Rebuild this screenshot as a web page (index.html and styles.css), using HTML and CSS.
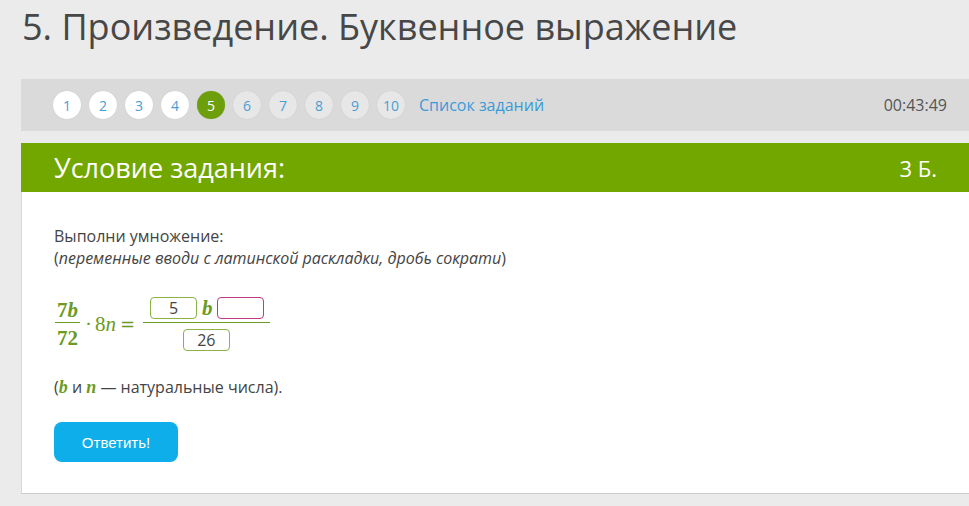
FILE: index.html
```html
<!DOCTYPE html>
<html lang="ru">
<head>
<meta charset="utf-8">
<link rel="stylesheet" href="styles.css">
</head>
<body>
<h1 class="title">5. Произведение. Буквенное выражение</h1>
<div class="main">
  <div class="nav">
    <div class="steps">
      <span class="step done">1</span>
      <span class="step done">2</span>
      <span class="step done">3</span>
      <span class="step done">4</span>
      <span class="step active">5</span>
      <span class="step">6</span>
      <span class="step">7</span>
      <span class="step">8</span>
      <span class="step">9</span>
      <span class="step">10</span>
      <a class="list-link">Список заданий</a>
    </div>
    <div class="timer">00:43:49</div>
  </div>
  <div class="head">
    <div class="head-title">Условие задания:</div>
    <div class="head-points">3 Б.</div>
  </div>
  <div class="card">
    <p class="task">Выполни умножение:<br>(<i>переменные вводи с латинской раскладки, дробь сократи</i>)</p>
    <div class="math">
      <span class="frac small">
        <span class="num"><b>7</b><b class="v">b</b></span>
        <span class="den"><b>72</b></span>
      </span>
      <span class="op">·</span>
      <span class="term">8<i>n</i></span>
      <span class="op eq">=</span>
      <span class="frac big">
        <span class="num"><span class="box">5</span><i class="var">b</i><span class="box pink"></span></span>
        <span class="den"><span class="box">26</span></span>
      </span>
    </div>
    <p class="note">(<b class="var">b</b> и <b class="var">n</b> — натуральные числа).</p>
    <button class="answer">Ответить!</button>
  </div>
</div>
</body>
</html>
```
FILE: styles.css
```css
html, body {
  margin: 0;
  padding: 0;
  background: #ebebeb;
  font-family: "Open Sans", "Noto Sans", sans-serif;
  color: #444;
  overflow: hidden;
}
.title {
  margin: 0;
  padding: 2px 0 0 22px;
  font-size: 36px;
  font-weight: 400;
  line-height: 49px;
  color: #474747;
  height: 77px;
  box-sizing: border-box;
}
.main {
  margin-left: 21px;
  margin-top: 2px;
}
.nav {
  height: 52px;
  background: #dadada;
  display: flex;
  align-items: center;
  justify-content: space-between;
  padding: 0 22px 0 32px;
}
.steps {
  display: flex;
  align-items: center;
  gap: 8px;
}
.step {
  width: 28px;
  height: 28px;
  border-radius: 50%;
  background: #e7e7e7;
  color: #4a9dd3;
  font-size: 14px;
  display: flex;
  align-items: center;
  justify-content: center;
  box-shadow: 0 0 1px rgba(0,0,0,0.15);
}
.step.done { background: #fff; }
.step.active { background: #6c9f0b; color: #fff; }
.list-link {
  margin-left: 6px;
  font-size: 16px;
  color: #3a9ad9;
}
.timer {
  font-size: 16px;
  color: #555;
}
.head {
  margin-top: 12px;
  height: 49px;
  background: #72a700;
  color: #fff;
  display: flex;
  align-items: center;
  justify-content: space-between;
  padding: 0 32px 0 33px;
}
.head-title { font-size: 27px; }
.head-points { font-size: 22px; }
.card {
  background: #fff;
  border-left: 1px solid #d8d8d8;
  border-bottom: 1px solid #cccccc;
  padding: 33px 0 32px 32px;
  height: 302px;
  box-sizing: border-box;
}
.task, .note {
  margin: 0;
  font-size: 16px;
  line-height: 22px;
  color: #444;
}
.math {
  display: flex;
  align-items: center;
  margin: 28px 0 25px 0;
  font-family: "Liberation Serif", "DejaVu Serif", serif;
  color: #6b9b22;
  font-size: 21px;
  line-height: 20px;
}
.frac {
  display: inline-flex;
  flex-direction: column;
  align-items: center;
}
.frac.small { padding: 0 1px; }
.frac.small .num, .frac.small .den { line-height: 20px; }
.frac.small .num { padding: 0 2px 2px 2px; border-bottom: 1px solid #6b9b22; }
.frac.small .den { padding-top: 5px; }
.frac .v { font-style: italic; }
.op { margin: 0 3px 0 4px; }
.term { font-style: normal; }
.term i { font-style: italic; }
.eq {
  margin: 0 8px 0 4px;
  font-family: "DejaVu Sans", sans-serif;
  font-size: 18px;
}
.frac.big .num {
  display: flex;
  align-items: center;
  height: 22px;
  padding: 0 6px 3px 7px;
  border-bottom: 1px solid #6b9b22;
}
.frac.big .den { padding-top: 6px; }
.var {
  font-family: "Liberation Serif", "DejaVu Serif", serif;
  font-style: italic;
  color: #6b9b22;
}
.frac.big .var { margin: 0 4px 0 5px; font-weight: 700; }
.box {
  width: 47px;
  height: 22px;
  box-sizing: border-box;
  border: 1px solid #8cb24a;
  border-radius: 4px;
  font-family: "Open Sans", sans-serif;
  font-size: 16px;
  line-height: 20px;
  color: #444;
  display: flex;
  align-items: center;
  justify-content: center;
  box-shadow: inset 0 0 1px rgba(0,0,0,0.1);
}
.box.pink { border-color: #c23a86; }
.note .var { font-size: 18px; line-height: 1; }
.answer {
  margin-top: 24px;
  width: 124px;
  height: 40px;
  border: none;
  border-radius: 8px;
  background: #0daeea;
  color: #fff;
  font-family: "Liberation Sans", Arial, sans-serif;
  font-size: 15px;
  padding: 0;
}
```
